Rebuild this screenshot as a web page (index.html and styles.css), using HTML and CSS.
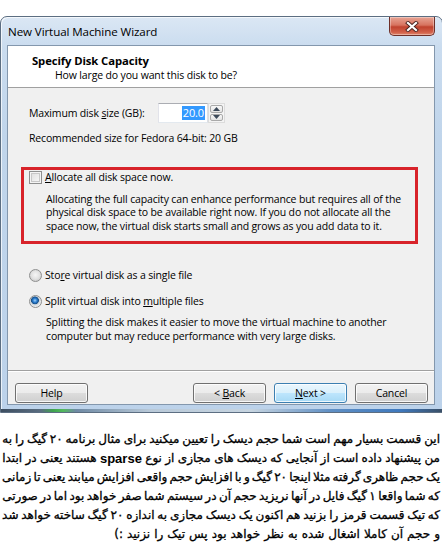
FILE: index.html
```html
<!DOCTYPE html>
<html>
<head>
<meta charset="utf-8">
<link rel="stylesheet" href="styles.css">
</head>
<body>
<div class="window">
  <div class="titlebar">
    <span class="title">New Virtual Machine Wizard</span>
    <div class="close">
      <svg width="14" height="11" viewBox="0 0 14 11"><path d="M3 2 L11 9 M11 2 L3 9" stroke="#4a2420" stroke-width="4" stroke-linecap="square"/><path d="M3 2 L11 9 M11 2 L3 9" stroke="#ffffff" stroke-width="2.2" stroke-linecap="square"/></svg>
    </div>
  </div>
  <div class="client">
    <div class="header">
      <div class="h-title">Specify Disk Capacity</div>
      <div class="h-sub">How large do you want this disk to be?</div>
    </div>
    <div class="content">
      <div class="size-row">
        <span class="size-label">Maximum disk <u>s</u>ize (GB):</span>
        <div class="spin-input"><span class="sel">20.0</span></div>
        <div class="spin-btns">
          <div class="spin-btn"><svg width="7" height="4" viewBox="0 0 7 4"><path d="M0 4 L3.5 0 L7 4 Z" fill="#3c4a5a"/></svg></div>
          <div class="spin-btn"><svg width="7" height="4" viewBox="0 0 7 4"><path d="M0 0 L7 0 L3.5 4 Z" fill="#3c4a5a"/></svg></div>
        </div>
      </div>
      <div class="rec">Recommended size for Fedora 64-bit: 20 GB</div>
      <div class="alloc-box">
        <div class="opt-row"><span class="checkbox"></span><span><u>A</u>llocate all disk space now.</span></div>
        <p class="desc desc-alloc">Allocating the full capacity can enhance performance but requires all of the<br>physical disk space to be available right now. If you do not allocate all the<br>space now, the virtual disk starts small and grows as you add data to it.</p>
      </div>
      <div class="opt-row radio-first"><span class="radio"></span><span>Sto<u>r</u>e virtual disk as a single file</span></div>
      <div class="opt-row radio-second"><span class="radio checked"></span><span>Split virtual disk into <u>m</u>ultiple files</span></div>
      <p class="desc desc-split">Splitting the disk makes it easier to move the virtual machine to another<br>computer but may reduce performance with very large disks.</p>
    </div>
    <div class="footer">
      <button class="btn">Help</button>
      <div class="nav-btns">
        <button class="btn">&lt; <u>B</u>ack</button>
        <button class="btn default"><u>N</u>ext &gt;</button>
        <button class="btn">Cancel</button>
      </div>
    </div>
  </div>
</div>
<div class="fa">
  <div class="fa-line"><span>این</span><span>قسمت</span><span>بسیار</span><span>مهم</span><span>است</span><span>شما</span><span>حجم</span><span>دیسک</span><span>را</span><span>تعیین</span><span>میکنید</span><span>برای</span><span>مثال</span><span>برنامه</span><span>۲۰</span><span>گیگ</span><span>را</span><span>به</span></div>
  <div class="fa-line"><span>من</span><span>پیشنهاد</span><span>داده</span><span>است</span><span>از</span><span>آنجایی</span><span>که</span><span>دیسک</span><span>های</span><span>مجازی</span><span>از</span><span>نوع</span><span class="latin">sparse</span><span>هستند</span><span>یعنی</span><span>در</span><span>ابتدا</span></div>
  <div class="fa-line"><span>یک</span><span>حجم</span><span>ظاهری</span><span>گرفته</span><span>مثلا</span><span>اینجا</span><span>۲۰</span><span>گیگ</span><span>و</span><span>با</span><span>افزایش</span><span>حجم</span><span>واقعی</span><span>افزایش</span><span>میابند</span><span>یعنی</span><span>تا</span><span>زمانی</span></div>
  <div class="fa-line"><span>که</span><span>شما</span><span>واقعا</span><span>۱</span><span>گیگ</span><span>فایل</span><span>در</span><span>آنها</span><span>نریزید</span><span>حجم</span><span>آن</span><span>در</span><span>سیستم</span><span>شما</span><span>صفر</span><span>خواهد</span><span>بود</span><span>اما</span><span>در</span><span>صورتی</span></div>
  <div class="fa-line"><span>که</span><span>تیک</span><span>قسمت</span><span>قرمز</span><span>را</span><span>بزنید</span><span>هم</span><span>اکنون</span><span>یک</span><span>دیسک</span><span>مجازی</span><span>به</span><span>اندازه</span><span>۲۰</span><span>گیگ</span><span>ساخته</span><span>خواهد</span><span>شد</span></div>
  <div class="fa-line last"><span>و</span><span>حجم</span><span>آن</span><span>کاملا</span><span>اشغال</span><span>شده</span><span>به</span><span>نظر</span><span>خواهد</span><span>بود</span><span>پس</span><span>تیک</span><span>را</span><span>نزنید</span><span>:)</span></div>
</div>
</body>
</html>
```
FILE: styles.css
```css
* { box-sizing: border-box; }
html, body { margin: 0; padding: 0; background: #fff; }
body {
  width: 442px;
  height: 550px;
  overflow: hidden;
  font-family: "Open Sans", "Noto Sans", sans-serif;
  font-size: 10.5px;
  letter-spacing: -0.15px;
  color: #000;
}
u { text-decoration: underline; text-underline-offset: 1px; }

.window {
  position: relative;
  margin-top: 16px;
  width: 443px;
  height: 397px;
  border: 1px solid #5c6e82;
  border-radius: 7px 7px 0 0;
  background: linear-gradient(180deg, #dbe7f4 0px, #cadcef 30px, #c0d5eb 120px, #bcd2ea 100%);
  box-shadow: inset 1px 1px 0 rgba(255,255,255,0.7);
  padding: 0 7px 7px 6px;
  display: flex;
  flex-direction: column;
}
.window::after {
  content: "";
  position: absolute;
  left: 0; right: 0; bottom: 0;
  height: 3px;
  background: linear-gradient(90deg, #3d4e60 0, #5a6d80 40px, #3fa34f 52px, #52b95c 62px, #6f8aa4 75px, #b9c9d8 150px, #c6d4e0 250px, #5f8fc4 330px, #3e78bd 400px, #3a4f66 100%);
}
.titlebar {
  height: 28px;
  display: flex;
  align-items: flex-start;
}
.title {
  padding: 7px 0 0 1px;
  font-size: 11.6px;
  line-height: 15px;
  letter-spacing: -0.1px;
  color: #000;
}
.close {
  margin-left: auto;
  width: 46px;
  height: 19px;
  border: 1px solid #6e2f28;
  border-top: none;
  border-radius: 0 0 5px 5px;
  background: linear-gradient(180deg, #e8a595 0%, #d7735f 45%, #c0422e 55%, #d2614a 85%, #e08a6f 100%);
  box-shadow: inset 0 0 0 1px rgba(255,255,255,0.35);
  display: flex;
  align-items: center;
  justify-content: center;
}

.client {
  flex: 1;
  background: #f0f0f0;
  border: 1px solid #8397ad;
  display: flex;
  flex-direction: column;
}
.header {
  background: #fff;
  border-bottom: 1px solid #a0a0a0;
  padding: 7px 0 4px 24px;
  line-height: 15px;
}
.h-title { font-weight: bold; font-size: 11.3px; letter-spacing: -0.1px; }
.h-sub { padding-left: 23px; }

.content {
  flex: 1;
  padding-left: 21px;
}
.size-row {
  margin-top: 15px;
  display: flex;
  align-items: center;
  height: 20px;
}
.size-label { width: 129px; }
.spin-input {
  width: 50px;
  height: 20px;
  background: #fff;
  border: 1px solid;
  border-color: #abadb3 #dbdfe6 #e3e9ef #e2e3ea;
  display: flex;
  align-items: center;
  justify-content: flex-end;
  padding-right: 2px;
}
.sel {
  background: #3399ff;
  color: #fff;
  font-size: 11px;
  line-height: 14px;
  padding: 0 1px;
}
.spin-btns {
  width: 17px;
  height: 20px;
  display: flex;
  flex-direction: column;
  gap: 1px;
  padding: 1px;
  border: 1px solid #dcdcdc;
  background: #f4f4f4;
}
.spin-btn {
  flex: 1;
  border: 1px solid #a9a9a9;
  border-radius: 2px;
  background: linear-gradient(180deg, #f8f8f8, #e3e3e3);
  display: flex;
  align-items: center;
  justify-content: center;
}
.rec {
  margin-top: 8px;
  line-height: 15px;
}

.alloc-box {
  margin: 21px 0 0 -8px;
  width: 397px;
  border: 3px solid #d8232a;
  padding: 1px 0 8px 5px;
}
.opt-row {
  display: flex;
  align-items: center;
  gap: 3px;
  height: 13px;
  line-height: 13px;
}
.checkbox {
  width: 13px;
  height: 13px;
  border: 1px solid #8e8f8f;
  background: linear-gradient(135deg, #dcdcdc, #fbfbfb);
  box-shadow: inset 0 0 0 1px #f4f4f4, inset 0 0 0 2px #c8c8c8;
}
.desc {
  margin: 0;
  line-height: 13.4px;
  padding-left: 17px;
  white-space: nowrap;
}
.desc-alloc { margin-top: 9px; }
.radio {
  width: 13px;
  height: 13px;
  border-radius: 50%;
  border: 1px solid #8e8f8f;
  background: radial-gradient(circle at 50% 45%, #f6f6f6 0, #e2e2e2 4px, #d0d0d0 6px);
}
.radio.checked {
  background: radial-gradient(circle at 45% 40%, #9fd1f8 0, #2a7dd0 2px, #184f86 3.6px, #c9d2da 4.2px, #ececec 6px);
}
.radio-first { margin-top: 25px; }
.radio-second { margin-top: 13px; }
.desc-split { margin-top: 8px; }

.footer {
  height: 34px;
  border-top: 1px solid #a0a0a0;
  box-shadow: inset 0 1px 0 #fff;
  padding: 12px 6px 0 7px;
  display: flex;
  align-items: flex-start;
}
.nav-btns {
  margin-left: auto;
  display: flex;
  gap: 8px;
}
.btn {
  width: 73px;
  height: 20px;
  padding: 0;
  font-family: inherit;
  font-size: 10.5px;
  letter-spacing: -0.15px;
  line-height: 16px;
  color: #000;
  border: 1px solid #707070;
  border-radius: 3px;
  background: linear-gradient(180deg, #f2f2f2 0%, #ebebeb 50%, #dddddd 50%, #cfcfcf 100%);
  box-shadow: inset 0 0 0 1px rgba(255,255,255,0.8);
}
.btn.default {
  border-color: #3c7fb1;
  background: linear-gradient(180deg, #eaf6fd 0%, #d9f0fc 50%, #bee6fd 50%, #a7d9f5 100%);
}

.fa {
  margin-top: 17px;
  padding: 0 2px;
  direction: rtl;
  font-family: "DejaVu Sans", sans-serif;
  font-size: 12px;
  letter-spacing: 0;
  line-height: 19px;
  color: #000;
  -webkit-text-stroke: 0.3px #000;
}
.fa-line {
  display: flex;
  justify-content: space-between;
  white-space: nowrap;
}
.fa-line.last {
  justify-content: flex-start;
  gap: 4px;
}
.latin {
  font-family: "Liberation Sans", Arial, sans-serif;
  font-weight: bold;
  font-size: 13px;
  -webkit-text-stroke: 0;
}
```
